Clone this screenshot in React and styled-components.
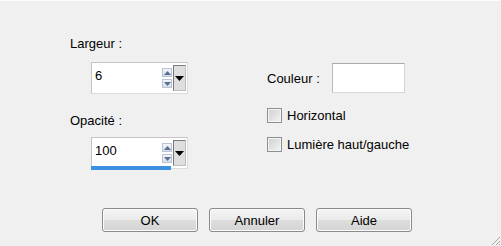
import React from 'react';
import styled, { createGlobalStyle } from 'styled-components';

const GlobalStyle = createGlobalStyle`
  html, body {
    margin: 0;
    padding: 0;
    background: #f0f0f0;
  }
  * {
    box-sizing: border-box;
  }
`;

const SpinField = ({ value, underline }) => (
    <SpinBox>
        <SpinInput>
            <SpinValue>{value}</SpinValue>
            <SpinArrows>
                <SpinArrow>
                    <svg width="7" height="4" viewBox="0 0 7 4"><path d="M0 4 L3.5 0 L7 4 Z" fill="#5a6f94" /></svg>
                </SpinArrow>
                <SpinArrow>
                    <svg width="7" height="4" viewBox="0 0 7 4"><path d="M0 0 L3.5 4 L7 0 Z" fill="#5a6f94" /></svg>
                </SpinArrow>
            </SpinArrows>
            <DropButton>
                <svg width="9" height="5" viewBox="0 0 9 5"><path d="M0 0 L4.5 5 L9 0 Z" fill="#000" /></svg>
            </DropButton>
        </SpinInput>
        {underline && <BlueBar />}
    </SpinBox>
);

const CheckItem = ({ label }) => (
    <CheckRow>
        <CheckBox />
        <CheckLabel>{label}</CheckLabel>
    </CheckRow>
);

const App = () => {
    return (
        <>
            <GlobalStyle />
            <Dialog>
                <Body>
                    <LeftColumn>
                        <FieldLabel>Largeur :</FieldLabel>
                        <FieldSlot $top={11}>
                            <SpinField value="6" />
                        </FieldSlot>
                        <FieldLabel $top={19}>Opacité :</FieldLabel>
                        <FieldSlot $top={9}>
                            <SpinField value="100" underline />
                        </FieldSlot>
                    </LeftColumn>
                    <RightColumn>
                        <ColorRow>
                            <ColorLabel>Couleur :</ColorLabel>
                            <ColorSwatch />
                        </ColorRow>
                        <CheckList>
                            <CheckItem label="Horizontal" />
                            <CheckItem label="Lumière haut/gauche" />
                        </CheckList>
                    </RightColumn>
                </Body>
                <ButtonRow>
                    <DialogButton>OK</DialogButton>
                    <DialogButton>Annuler</DialogButton>
                    <DialogButton>Aide</DialogButton>
                </ButtonRow>
                <Grip width="12" height="12" viewBox="0 0 12 12">
                    <path d="M11 3 L3 11 M11 7 L7 11 M11 10 L10 11" stroke="#a8a8a8" strokeWidth="1" />
                </Grip>
            </Dialog>
        </>
    );
};

export default App;

const Dialog = styled.div`
  position: relative;
  width: 501px;
  height: 246px;
  display: flex;
  flex-direction: column;
  background: #f0f0f0;
  border-top: 1px solid #fbfbfb;
  font-family: 'Liberation Sans', Arial, sans-serif;
  font-size: 13px;
  color: #000;
  overflow: hidden;
`;

const Body = styled.div`
  flex: 1;
  display: flex;
  padding: 35px 0 0 70px;
`;

const LeftColumn = styled.div`
  width: 197px;
  display: flex;
  flex-direction: column;
`;

const FieldLabel = styled.div`
  line-height: 15px;
  height: 15px;
  margin-top: ${p => p.$top || 0}px;
`;

const FieldSlot = styled.div`
  margin-top: ${p => p.$top}px;
  padding-left: 21px;
`;

const SpinBox = styled.div`
  width: 97px;
  display: flex;
  flex-direction: column;
`;

const SpinInput = styled.div`
  height: 32px;
  display: flex;
  align-items: center;
  background: #fff;
  border: 1px solid #c4c4c4;
  border-right-color: #dcdcdc;
  border-bottom-color: #dcdcdc;
  padding-left: 3px;
`;

const SpinValue = styled.span`
  flex: 1;
  line-height: 15px;
  margin-top: -6px;
`;

const SpinArrows = styled.div`
  display: flex;
  flex-direction: column;
  gap: 2px;
  margin-right: 1px;
`;

const SpinArrow = styled.div`
  width: 10px;
  height: 9px;
  display: flex;
  align-items: center;
  justify-content: center;
  border: 1px solid #b9c3d6;
  background: linear-gradient(#f4f6fa, #d6dce8);
`;

const DropButton = styled.div`
  width: 13px;
  height: 26px;
  display: flex;
  align-items: center;
  justify-content: center;
  background: #dedede;
  border: 1px solid #7a7a7a;
  border-right-color: #bdbdbd;
  border-bottom-color: #bdbdbd;
  margin-right: 1px;
`;

const BlueBar = styled.div`
  width: 80px;
  height: 4px;
  margin-top: -3px;
  background: #3d8fe0;
`;

const RightColumn = styled.div`
  display: flex;
  flex-direction: column;
  padding-top: 27px;
`;

const ColorRow = styled.div`
  display: flex;
  align-items: center;
  height: 30px;
`;

const ColorLabel = styled.span`
  width: 65px;
`;

const ColorSwatch = styled.div`
  width: 73px;
  height: 30px;
  background: #fff;
  border: 1px solid #d6d6d6;
  border-top-color: #a9a9a9;
  border-left-color: #b9b9b9;
`;

const CheckList = styled.div`
  display: flex;
  flex-direction: column;
  gap: 14px;
  margin-top: 15px;
`;

const CheckRow = styled.div`
  display: flex;
  align-items: center;
  gap: 5px;
  height: 15px;
`;

const CheckBox = styled.div`
  width: 15px;
  height: 15px;
  border: 1px solid #8e8f8f;
  box-shadow: inset 0 0 0 1px #f4f4f4;
  background: linear-gradient(135deg, #cfcfcf, #f3f3f3);
`;

const CheckLabel = styled.span`
  line-height: 15px;
`;

const ButtonRow = styled.div`
  display: flex;
  gap: 11px;
  padding: 0 0 14px 102px;
`;

const DialogButton = styled.button`
  width: 96px;
  height: 24px;
  padding: 0;
  font-family: 'Liberation Sans', Arial, sans-serif;
  font-size: 13px;
  color: #000;
  border: 1px solid #8a8a8a;
  border-radius: 3px;
  background: linear-gradient(#f4f4f4 0%, #ebebeb 48%, #dddddd 52%, #d4d4d4 100%);
  box-shadow: inset 0 0 0 1px #fcfcfc;
`;

const Grip = styled.svg`
  position: absolute;
  right: 0;
  bottom: 0;
`;
